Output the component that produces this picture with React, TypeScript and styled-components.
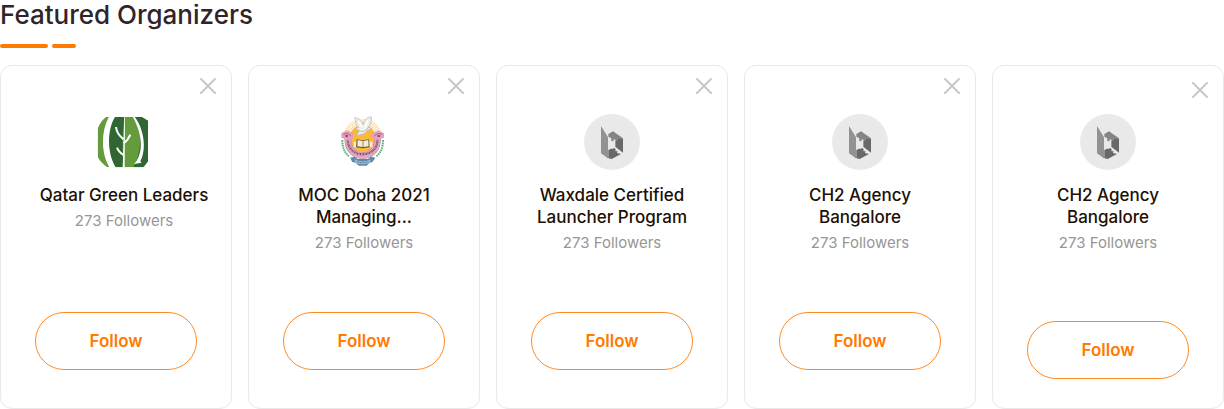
import React from "react";
import styled, { createGlobalStyle } from "styled-components";

const GlobalStyle = createGlobalStyle`
  *, *::before, *::after { box-sizing: border-box; }
  body {
    margin: 0;
    background: #ffffff;
    font-family: Inter, "Open Sans", sans-serif;
  }
`;

const Section = styled.section`
  width: 100%;
`;

const Heading = styled.h2`
  margin: 0;
  font-size: 26px;
  line-height: 30px;
  font-weight: 500;
  color: #30242b;
`;

const Underline = styled.div`
  display: flex;
  gap: 4px;
  padding: 14px 0 17px;
`;

const Dash = styled.span<{ $width: number }>`
  width: ${(p) => p.$width}px;
  height: 4px;
  border-radius: 2px;
  background: #ff7a00;
`;

const CardList = styled.ul`
  display: grid;
  grid-template-columns: repeat(5, minmax(0, 1fr));
  gap: 16px;
  margin: 0;
  padding: 0;
  list-style: none;
`;

const Card = styled.li<{ $last: boolean }>`
  display: flex;
  flex-direction: column;
  align-items: center;
  min-height: 344px;
  padding: ${(p) => (p.$last ? "16px 15px 29px" : "12px 15px 38px")};
  border: 1px solid #e9e9e9;
  border-radius: 12px;
`;

const CloseButton = styled.button`
  display: flex;
  align-self: flex-end;
  padding: 0;
  border: 0;
  background: none;
  cursor: pointer;
`;

const Details = styled.div<{ $last: boolean; $inset: boolean }>`
  display: flex;
  flex: 1;
  flex-direction: column;
  align-items: center;
  align-self: stretch;
  padding-top: ${(p) => (p.$last ? 16 : 20)}px;
  padding-left: ${(p) => (p.$inset ? 16 : 0)}px;
  text-align: center;
`;

const Name = styled.h3`
  margin: 14px 0 5px;
  font-size: 17px;
  line-height: 22px;
  font-weight: 500;
  color: #201003;
  white-space: pre-line;
`;

const Followers = styled.p`
  margin: 0;
  font-size: 15px;
  line-height: 20px;
  color: #969696;
`;

const FollowButton = styled.button`
  width: 162px;
  max-width: 100%;
  height: 58px;
  padding: 0;
  border: 1px solid #ff8b22;
  border-radius: 29px;
  background: #ffffff;
  font-family: inherit;
  font-size: 17px;
  line-height: 22px;
  font-weight: 600;
  color: #ff7a00;
  cursor: pointer;
`;

const Logo = styled.svg`
  display: block;
  width: 56px;
  height: 56px;
  flex: none;
`;

const LeafLogo = () => (
  <Logo viewBox="18 18 168 168" aria-hidden="true">
    <defs>
      <clipPath id="leaf-outline">
        <path d="M48 27H155L174 38V160L160 178H52Q32 164 23 146V62Q30 42 48 27Z" />
      </clipPath>
    </defs>
    <g clipPath="url(#leaf-outline)">
      <path d="M18 20H186V186H18Z" fill="#639b3d" />
      <path d="M72 24C46 62 46 142 76 182H104C95 165 97 55 104 24Z" fill="#306633" />
      <path d="M132 24C158 70 156 133 128 182H180V24Z" fill="#306633" />
      <path d="M58 24C31 70 33 142 61 182H80C50 142 50 62 77 24Z" fill="#fff" />
      <path d="M127 24C152 68 163 121 139 160L132 168L155 164L151 160C170 124 163 62 132 24Z" fill="#fff" />
      <path d="M103 24H105L104 182H98Z" fill="#fff" />
      <path d="M78 57Q80 78 101 94M121 80Q116 94 101 106M81 119Q86 133 101 141" fill="none" stroke="#fff" strokeWidth="6" />
    </g>
  </Logo>
);

const rays = Array.from({ length: 25 }, (_, i) => {
  const a = Math.PI + (i * Math.PI) / 24;
  return `M${92 + 35 * Math.cos(a)} ${88 + 35 * Math.sin(a)}L${92 + 60 * Math.cos(a)} ${88 + 55 * Math.sin(a)}`;
}).join("");

const DoveLogo = () => (
  <Logo viewBox="12 18 168 168" aria-hidden="true">
    <path d={rays} stroke="#fbd27e" strokeWidth="4" strokeDasharray="4 2" />
    <circle cx="92" cy="92" r="40" fill="#fcb83a" />
    <path d="M31 96Q31 129 51 145M153 96Q153 129 133 145" fill="none" stroke="#56b878" strokeWidth="6" strokeDasharray="5 2" />
    <path d="M48 86C39 161 145 161 136 86" fill="none" stroke="#b48197" strokeWidth="20" />
    <path d="M48 86C39 161 145 161 136 86" fill="none" stroke="#e5a8c2" strokeWidth="17" />
    <path d="M48 90C41 155 143 155 136 90" fill="none" stroke="#754760" strokeWidth="7" strokeDasharray="2 2 3 2" />
    <path d="M28 76L45 67L66 77L62 92L47 96L28 89ZM156 76L139 67L118 77L122 92L137 96L156 89Z" fill="#e6a0be" />
    <path d="M34 79L47 76L57 84M150 79L137 76L127 84" stroke="#ae6387" strokeWidth="3" fill="none" />
    <path d="M41 82h6v4h-6zM137 82h6v4h-6z" fill="#40232e" />
    <path d="M65 101h9v17h-9zM112 101h9v17h-9z" fill="#f7eee1" />
    <path d="M74 94L92 97L111 94L113 118L93 121L72 118Z" fill="#705932" />
    <path d="M77 96L92 99V117L76 115ZM94 99L109 96L110 115L94 117Z" fill="#f4edd5" />
    <path d="M55 149L68 146L76 153H108L116 146L130 149L122 161L112 165L104 173H80L72 165L60 161Z" fill="#5d88aa" />
    <path d="M67 154Q92 167 117 154L113 164Q92 173 71 164Z" fill="#9bc3de" />
    <path d="M74 161Q92 168 110 161" fill="none" stroke="#446477" strokeWidth="3" strokeDasharray="3 2" />
    <path d="M68 29C83 30 91 41 93 51C97 35 108 25 118 27C120 43 115 51 108 58L120 62L105 68C99 79 87 80 73 82L82 69L71 61L80 58C69 51 73 40 68 29Z" fill="#ececec" stroke="#b4b3ae" strokeWidth="2" />
    <path d="M79 40L91 58M108 37L99 59M84 68L101 64" stroke="#fff" strokeWidth="5" />
    <path d="M82 68Q96 74 108 61" fill="none" stroke="#b7b5b0" strokeWidth="3" />
  </Logo>
);

const BrandLogo = () => (
  <Logo viewBox="18 18 168 168" aria-hidden="true">
    <circle cx="102" cy="102" r="84" fill="#e9e9e9" />
    <path d="M69 54L90 88V151L69 136Z" fill="#929292" />
    <path d="M91 78L105 70L135 91L121 94L113 97L108 93L106 100L100 99V91L91 86Z" fill="#858585" />
    <path d="M112 98L121 93L135 91V134L112 116Z" fill="#696969" />
    <path d="M91 126L103 121V124L109 120L113 124L112 130L118 129L117 135L129 138L101 153L91 150Z" fill="#696969" />
    <path d="M80 144L91 150L101 153L95 153Z" fill="#858585" />
  </Logo>
);

const organizers = [
  { name: "Qatar Green Leaders", Mark: LeafLogo },
  { name: "MOC Doha 2021\nManaging...", Mark: DoveLogo },
  { name: "Waxdale Certified\nLauncher Program", Mark: BrandLogo },
  { name: "CH2 Agency\nBangalore", Mark: BrandLogo },
  { name: "CH2 Agency\nBangalore", Mark: BrandLogo },
];

export default function App() {
  return (
    <Section aria-labelledby="featured-title">
      <GlobalStyle />
      <Heading id="featured-title">Featured Organizers</Heading>
      <Underline>
        <Dash $width={48} />
        <Dash $width={24} />
      </Underline>
      <CardList>
        {organizers.map(({ name, Mark }, i) => {
          const last = i === organizers.length - 1;
          return (
            <Card key={i} $last={last}>
              <CloseButton type="button" aria-label="Dismiss">
                <svg width="16" height="16" viewBox="0 0 16 16" aria-hidden="true">
                  <path d="M1 1L15 15M15 1L1 15" stroke="#c8c8cc" strokeWidth="2" strokeLinecap="round" />
                </svg>
              </CloseButton>
              <Details $last={last} $inset={i === 0}>
                <Mark />
                <Name>{name}</Name>
                <Followers>273 Followers</Followers>
              </Details>
              <FollowButton type="button">Follow</FollowButton>
            </Card>
          );
        })}
      </CardList>
    </Section>
  );
}
